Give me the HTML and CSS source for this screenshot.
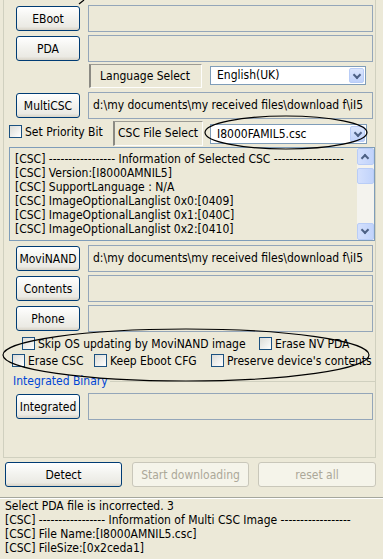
FILE: index.html
```html
<!DOCTYPE html>
<html lang="en">
<head>
<meta charset="UTF-8"/>
<title>Multi Downloader</title>
<link rel="stylesheet" href="styles.css">
</head>
<body>
<div class="screen">
 <div class="panel">
  <div class="file-row first">
   <button class="btn">EBoot</button>
   <div class="path"></div>
  </div>
  <div class="file-row">
   <button class="btn">PDA</button>
   <div class="path"></div>
  </div>
  <div class="lang-row">
   <div class="static lang-label">Language Select</div>
   <div class="combo lang-combo"><span>English(UK)</span><i class="drop"></i></div>
  </div>
  <div class="file-row multi">
   <button class="btn">MultiCSC</button>
   <div class="path">d:\my documents\my received files\download f\iI5</div>
  </div>
  <div class="csc-row">
   <label class="chk prio"><span class="box"></span>Set Priority Bit</label>
   <div class="static csc-label">CSC File Select</div>
   <div class="combo csc-combo"><span>I8000FAMIL5.csc</span><i class="drop"></i></div>
  </div>
  <div class="log">
   <div class="log-text">
    <div>[CSC] ----------------- Information of Selected CSC ------------------</div>
    <div>[CSC] Version:[I8000AMNIL5]</div>
    <div>[CSC] SupportLanguage : N/A</div>
    <div>[CSC] ImageOptionalLanglist 0x0:[0409]</div>
    <div>[CSC] ImageOptionalLanglist 0x1:[040C]</div>
    <div>[CSC] ImageOptionalLanglist 0x2:[0410]</div>
   </div>
   <div class="vscroll">
    <i class="sb-btn up"></i>
    <i class="sb-thumb"></i>
    <i class="sb-btn down"></i>
   </div>
  </div>
  <div class="file-row movi">
   <button class="btn">MoviNAND</button>
   <div class="path">d:\my documents\my received files\download f\iI5</div>
  </div>
  <div class="file-row">
   <button class="btn">Contents</button>
   <div class="path"></div>
  </div>
  <div class="file-row">
   <button class="btn">Phone</button>
   <div class="path"></div>
  </div>
  <div class="opt-row one">
   <label class="chk w-skip"><span class="box"></span>Skip OS updating by MoviNAND image</label>
   <label class="chk"><span class="box"></span>Erase NV PDA</label>
  </div>
  <div class="opt-row two">
   <label class="chk w-csc"><span class="box"></span>Erase CSC</label>
   <label class="chk w-eboot"><span class="box"></span>Keep Eboot CFG</label>
   <label class="chk"><span class="box"></span>Preserve device's contents</label>
  </div>
  <div class="group-title"><span>Integrated Binary</span></div>
  <div class="file-row integ">
   <button class="btn">Integrated</button>
   <div class="path"></div>
  </div>
 </div>

 <div class="actions">
  <button class="btn wide">Detect</button>
  <button class="btn wide off">Start downloading</button>
  <button class="btn wide off">reset all</button>
 </div>

 <div class="status">
  <div>Select PDA file is incorrected. 3</div>
  <div>[CSC] ----------------- Information of Multi CSC Image ------------------</div>
  <div>[CSC] File Name:[I8000AMNIL5.csc]</div>
  <div>[CSC] FileSize:[0x2ceda1]</div>
 </div>

 <!-- pen marks drawn over the screenshot -->
 <svg class="marks" width="383" height="559" viewBox="0 0 383 559">
  <path d="M79 4 L84 0" />
  <ellipse cx="286" cy="132.5" rx="81" ry="16.5" />
  <ellipse cx="186" cy="355" rx="183" ry="26" />
 </svg>
</div>
</body>
</html>
```

FILE: styles.css
```css
body{
 margin: 0;
 background: #ece9d8;
 font-family: "DejaVu Sans Condensed", "DejaVu Sans", sans-serif;
 font-size: 12px;
 color: #000;
}
.screen{
 position: relative;
 width: 383px;
 height: 559px;
 overflow: hidden;
}
.panel{
 margin-left: 3px;
 width: 373px;
 height: 458px;
 box-sizing: border-box;
 border: 1px solid #d0d0bf;
 border-top: none;
 padding-top: 5px;
}

/* xp push button */
.btn{
 display: block;
 box-sizing: border-box;
 width: 64px;
 height: 25px;
 margin-top: 1px;
 padding: 0;
 font: inherit;
 color: #000;
 border: 1px solid #003c74;
 border-radius: 3px;
 background: linear-gradient(#ffffff, #f3f3ef 45%, #ebeae4 85%, #d8d4c8);
}
.btn.wide{
 width: 117px;
 margin: 0;
}
.btn.off{
 color: #aca899;
 border-color: #c9c7ba;
 background: #f5f4ea;
}

.file-row{
 display: flex;
 align-items: flex-start;
 height: 27px;
 margin-top: 3px;
 padding-left: 12px;
}
.file-row.first{ margin-top: 0; }
.file-row.multi{ margin-top: 4px; }
.file-row.movi{ margin-top: 4px; }
.file-row.integ{ margin-top: 5px; }
.path{
 box-sizing: border-box;
 width: 285px;
 height: 27px;
 margin-left: 8px;
 padding: 5px 4px 0;
 border: 1px solid #94a6b9;
 white-space: nowrap;
 overflow: hidden;
}

/* sunken static labels */
.static{
 box-sizing: border-box;
 border-top: 1px solid #9c9b94;
 border-left: 2px solid #8b8a83;
 border-right: 1px solid #fdfdfb;
 border-bottom: 1px solid #fdfdfb;
 white-space: nowrap;
}
.lang-row{
 display: flex;
 height: 24px;
 margin-top: 2px;
 padding-left: 85px;
}
.lang-label{
 width: 113px;
 height: 24px;
 padding: 4px 0 0 9px;
}
.csc-row{
 display: flex;
 height: 25px;
 margin-top: 2px;
 padding-left: 5px;
}
.csc-label{
 width: 90px;
 height: 25px;
 padding: 4px 0 0 3px;
}

/* combo boxes */
.combo{
 position: relative;
 box-sizing: border-box;
 background: #fff;
 border: 1px solid #7f9db9;
 padding: 2px 0 0 6px;
 white-space: nowrap;
}
.lang-combo{
 width: 156px;
 height: 19px;
 margin: 2px 0 0 8px;
 padding-top: 1px;
}
.csc-combo{
 width: 157px;
 height: 20px;
 margin: 3px 0 0 7px;
}
.drop{
 position: absolute;
 top: 1px;
 right: 1px;
 bottom: 1px;
 width: 15px;
 border: 1px solid #b9cdf7;
 border-radius: 2px;
 box-sizing: border-box;
 background: linear-gradient(#dbe6fd, #c0d2fa);
}
.drop::after{
 content: "";
 position: absolute;
 left: 4px;
 top: 3px;
 width: 4px;
 height: 4px;
 border-right: 2px solid #4d6185;
 border-bottom: 2px solid #4d6185;
 transform: rotate(45deg);
}

/* check boxes */
.chk{
 display: flex;
 align-items: center;
 white-space: nowrap;
}
.box{
 box-sizing: border-box;
 width: 13px;
 height: 13px;
 margin-right: 3px;
 border: 1px solid #1c5180;
 background: linear-gradient(135deg, #dcdcd7, #ffffff);
}
.prio{
 width: 104px;
 height: 13px;
 margin-top: 4px;
}
.opt-row{
 display: flex;
 height: 13px;
}
.opt-row.one{
 margin-top: 5px;
 padding-left: 18px;
}
.opt-row.two{
 margin-top: 4px;
 padding-left: 8px;
}
.w-skip{ width: 237px; }
.w-csc{ width: 82px; }
.w-eboot{ width: 117px; }

/* list box */
.log{
 display: flex;
 box-sizing: border-box;
 width: 366px;
 height: 94px;
 margin: 1px 0 0 5px;
 border: 1px solid #7f9db9;
}
.log-text{
 flex: 1;
 padding: 4px 0 0 5px;
 line-height: 14px;
 white-space: nowrap;
 overflow: hidden;
}
.vscroll{
 display: flex;
 flex-direction: column;
 width: 17px;
 background: #f4f3ee;
}
.sb-btn, .sb-thumb{
 position: relative;
 display: block;
 box-sizing: border-box;
 height: 17px;
 border: 1px solid #b9cdf7;
 border-radius: 2px;
 background: linear-gradient(90deg, #d4e0fd, #c1d3fb);
}
.sb-thumb{
 height: 16px;
 margin-top: 3px;
}
.sb-btn.down{ margin-top: auto; }
.sb-btn::after{
 content: "";
 position: absolute;
 left: 4px;
 width: 4px;
 height: 4px;
 border-right: 2px solid #4d6185;
 border-bottom: 2px solid #4d6185;
}
.sb-btn.down::after{ top: 3px; transform: rotate(45deg); }
.sb-btn.up::after{ top: 6px; transform: rotate(-135deg); }

/* group title */
.group-title{
 display: flex;
 align-items: center;
 height: 14px;
 margin-top: 7px;
 padding-left: 9px;
 color: #0046d5;
}
.group-title::after{
 content: "";
 flex: 1;
 margin-left: 2px;
 border-top: 1px solid #d0d0bf;
}

.actions{
 display: flex;
 gap: 10px;
 margin-top: 4px;
 padding-left: 5px;
}
.actions .off + .off{ margin-left: -1px; width: 118px; }
.status{
 margin-top: 10px;
 padding: 1px 0 0 5px;
 border-top: 1px solid #a5a79d;
 box-shadow: inset 0 1px 0 #fff;
 line-height: 14px;
 white-space: nowrap;
}

.marks{
 position: absolute;
 left: 0;
 top: 0;
 pointer-events: none;
}
.marks path, .marks ellipse{
 fill: none;
 stroke: #000;
 stroke-width: 1.2;
}
```
